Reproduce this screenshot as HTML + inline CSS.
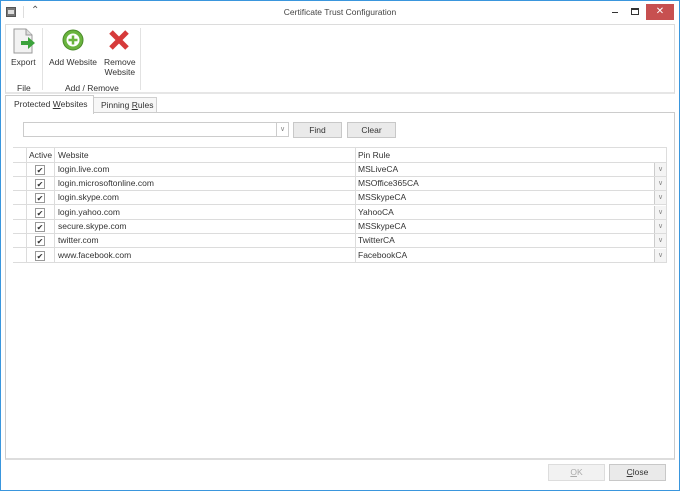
<!DOCTYPE html>
<html><head><style>
*{box-sizing:border-box;margin:0;padding:0}
body{width:680px;height:491px;background:#fff;font-family:"Liberation Sans",sans-serif;font-size:8.5px;color:#333;position:relative;overflow:hidden}
.a{position:absolute}
.win{left:0;top:0;width:680px;height:491px;border:1px solid #3a96dd}
.t{white-space:nowrap}
.btn{position:absolute;background:#eaeaea;border:1px solid #c8c8c8;text-align:center;line-height:14px;font-size:8.5px;color:#333}
.row{position:absolute;left:13px;width:654px;height:15px;border-bottom:1px solid #dcdcdc}
.cb{position:absolute;left:23px;top:3px;width:10px;height:10px;border:1px solid #999;background:#fff;font-size:8px;line-height:9px;text-align:center;color:#333}
.c{position:absolute;top:2px}
.dd{position:absolute;left:641px;top:1px;width:12px;height:13px;border-left:1px solid #ccc;background:#f4f4f4;color:#888;font-size:7px;text-align:center;line-height:13px}
.vl{position:absolute;top:0;width:1px;height:15px;background:#dcdcdc}
</style></head><body>
<div class="a win"></div>
<div class="a" style="left:6px;top:7px;width:10px;height:10px;background:#777;border:1px solid #555"></div>
<div class="a" style="left:8px;top:10px;width:6px;height:4px;background:#ddd"></div>
<div class="a" style="left:23px;top:6px;width:1px;height:12px;background:#ddd"></div>
<div class="a t" style="left:31px;top:5px;font-size:10px;color:#555">&#8963;</div>
<div class="a t" style="left:0;width:680px;top:7px;text-align:center;color:#444;font-size:8.5px">Certificate Trust Configuration</div>
<div class="a" style="left:612px;top:12px;width:6px;height:1px;background:#333"></div>
<div class="a" style="left:631px;top:8px;width:8px;height:7px;border:1px solid #333;border-top-width:2px"></div>
<div class="a" style="left:646px;top:4px;width:28px;height:16px;background:#c75050;color:#fff;text-align:center;line-height:16px;font-size:10px">✕</div>

<div class="a" style="left:5px;top:24px;width:670px;height:70px;border:1px solid #dcdcdc;border-bottom:2px solid #e6e6e6"></div>
<div class="a" style="left:42px;top:28px;width:1px;height:62px;background:#e2e2e2"></div>
<div class="a" style="left:140px;top:28px;width:1px;height:62px;background:#e2e2e2"></div>
<svg class="a" style="left:13px;top:28px" width="24" height="26" viewBox="0 0 24 26">
<path d="M1 1h12l6 6v18H1z" fill="#f2f2f2" stroke="#999"/><path d="M13 1v6h6" fill="#ddd" stroke="#999"/>
<path d="M8 13h7v-4l7 6-7 6v-4H8z" fill="#3ca33c"/></svg>
<div class="a t" style="left:11px;top:57px">Export</div>
<svg class="a" style="left:62px;top:29px" width="22" height="22"><circle cx="11" cy="11" r="10" fill="#6ab43e" stroke="#4a8a2a"/><circle cx="11" cy="11" r="6.5" fill="#fff"/><path d="M11 6.5v9M6.5 11h9" stroke="#6ab43e" stroke-width="2.5"/></svg>
<div class="a t" style="left:49px;top:57px">Add Website</div>
<svg class="a" style="left:108px;top:29px" width="22" height="22"><path d="M3 3L19 19M19 3L3 19" stroke="#d63a3a" stroke-width="5"/></svg>
<div class="a t" style="left:104px;top:57px;text-align:center;line-height:10px">Remove<br>Website</div>
<div class="a t" style="left:17px;top:83px">File</div>
<div class="a t" style="left:65px;top:83px">Add / Remove</div>

<div class="a" style="left:93px;top:97px;width:64px;height:16px;border:1px solid #d0d0d0;background:#f7f7f7"></div>
<div class="a t" style="left:101px;top:100px">Pinning <u>R</u>ules</div>
<div class="a" style="left:5px;top:112px;width:670px;height:348px;border:1px solid #ccc;border-bottom:2px solid #ddd"></div>
<div class="a" style="left:5px;top:95px;width:89px;height:19px;border:1px solid #ccc;border-bottom:none;background:#fff"></div>
<div class="a t" style="left:14px;top:99px">Protected <u>W</u>ebsites</div>

<div class="a" style="left:23px;top:122px;width:266px;height:15px;border:1px solid #ccc"></div>
<div class="a" style="left:276px;top:123px;width:12px;height:13px;border-left:1px solid #ccc;color:#888;font-size:7px;text-align:center;line-height:13px">&#8744;</div>
<div class="btn" style="left:293px;top:122px;width:49px;height:16px">Find</div>
<div class="btn" style="left:347px;top:122px;width:49px;height:16px">Clear</div>

<div class="row" style="top:147px;border-top:1px solid #ddd;border-right:1px solid #ddd;height:16px"><div class="vl" style="left:13px"></div><div class="vl" style="left:41px"></div><div class="vl" style="left:342px"></div><div class="c t" style="left:16px">Active</div><div class="c t" style="left:45px">Website</div><div class="c t" style="left:345px">Pin Rule</div></div>
<div class="row" style="top:162px"><div class="vl" style="left:13px"></div><div class="vl" style="left:41px"></div><div class="vl" style="left:342px"></div><div class="vl" style="left:653px"></div><div class="cb" style="left:22px">✔</div><div class="c t" style="left:45px">login.live.com</div><div class="c t" style="left:345px">MSLiveCA</div><div class="dd">&#8744;</div></div>
<div class="row" style="top:176px"><div class="vl" style="left:13px"></div><div class="vl" style="left:41px"></div><div class="vl" style="left:342px"></div><div class="vl" style="left:653px"></div><div class="cb" style="left:22px">✔</div><div class="c t" style="left:45px">login.microsoftonline.com</div><div class="c t" style="left:345px">MSOffice365CA</div><div class="dd">&#8744;</div></div>
<div class="row" style="top:190px"><div class="vl" style="left:13px"></div><div class="vl" style="left:41px"></div><div class="vl" style="left:342px"></div><div class="vl" style="left:653px"></div><div class="cb" style="left:22px">✔</div><div class="c t" style="left:45px">login.skype.com</div><div class="c t" style="left:345px">MSSkypeCA</div><div class="dd">&#8744;</div></div>
<div class="row" style="top:205px"><div class="vl" style="left:13px"></div><div class="vl" style="left:41px"></div><div class="vl" style="left:342px"></div><div class="vl" style="left:653px"></div><div class="cb" style="left:22px">✔</div><div class="c t" style="left:45px">login.yahoo.com</div><div class="c t" style="left:345px">YahooCA</div><div class="dd">&#8744;</div></div>
<div class="row" style="top:219px"><div class="vl" style="left:13px"></div><div class="vl" style="left:41px"></div><div class="vl" style="left:342px"></div><div class="vl" style="left:653px"></div><div class="cb" style="left:22px">✔</div><div class="c t" style="left:45px">secure.skype.com</div><div class="c t" style="left:345px">MSSkypeCA</div><div class="dd">&#8744;</div></div>
<div class="row" style="top:233px"><div class="vl" style="left:13px"></div><div class="vl" style="left:41px"></div><div class="vl" style="left:342px"></div><div class="vl" style="left:653px"></div><div class="cb" style="left:22px">✔</div><div class="c t" style="left:45px">twitter.com</div><div class="c t" style="left:345px">TwitterCA</div><div class="dd">&#8744;</div></div>
<div class="row" style="top:248px"><div class="vl" style="left:13px"></div><div class="vl" style="left:41px"></div><div class="vl" style="left:342px"></div><div class="vl" style="left:653px"></div><div class="cb" style="left:22px">✔</div><div class="c t" style="left:45px">www.facebook.com</div><div class="c t" style="left:345px">FacebookCA</div><div class="dd">&#8744;</div></div>

<div class="btn" style="left:548px;top:464px;width:57px;height:17px;color:#aaa;background:#f2f2f2;border-color:#ddd"><u>O</u>K</div>
<div class="btn" style="left:609px;top:464px;width:57px;height:17px"><u>C</u>lose</div>
</body></html>
